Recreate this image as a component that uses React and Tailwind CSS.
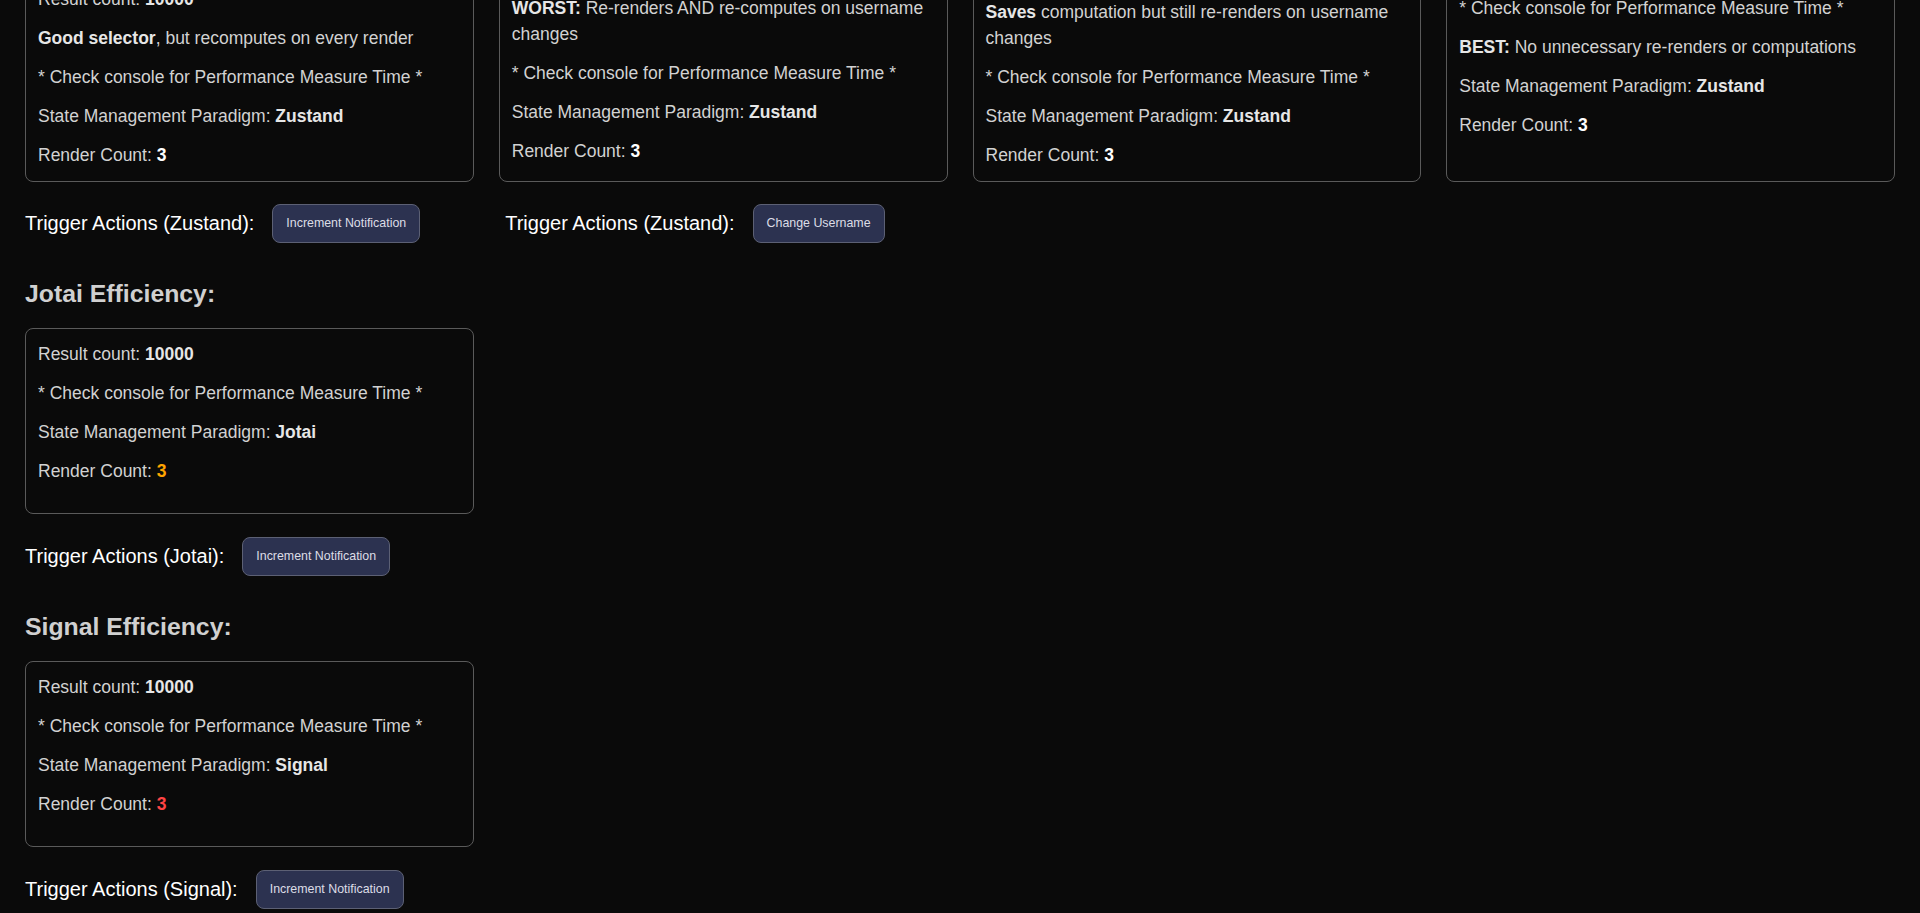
import React from "react";

const font = { fontFamily: '"Liberation Sans", Arial, sans-serif' };

function Line({ children }) {
  return <p className="m-0 text-[17.5px] leading-[26px] text-[#d2d2d2]">{children}</p>;
}

function B({ children, className = "" }) {
  return <strong className={"font-bold text-[#e6e6e6] " + className}>{children}</strong>;
}

function Card({ pt, pb = "pb-[13px]", children }) {
  return (
    <div className={"border border-[#5a5a5a] rounded-[8px] px-[12px] " + pt + " " + pb}>
      <div className="flex flex-col gap-[13px]">{children}</div>
    </div>
  );
}

function Btn({ children }) {
  return (
    <button className="bg-[#2c3250] border border-[#5c6074] rounded-[8px] px-[13px] py-[11px] text-[12.4px] leading-[15px] text-[#dcdde6] cursor-pointer">
      {children}
    </button>
  );
}

function Trigger({ label, button }) {
  return (
    <div className="flex items-center gap-[18px]">
      <span className="text-[20px] leading-[23px] text-white">{label}</span>
      <Btn>{button}</Btn>
    </div>
  );
}

function Section({ title, paradigm, countClass, triggerLabel }) {
  return (
    <>
      <h2 className="mt-[37px] m-0 text-[24.8px] leading-[28px] font-bold text-[#d0d0d0]">{title}</h2>
      <div className="mt-[20px] w-[449px]">
        <Card pt="pt-[12px]" pb="pb-[29px]">
          <Line>
            Result count: <B>10000</B>
          </Line>
          <Line>* Check console for Performance Measure Time *</Line>
          <Line>
            State Management Paradigm: <B>{paradigm}</B>
          </Line>
          <Line>
            Render Count: <strong className={"font-bold " + countClass}>3</strong>
          </Line>
        </Card>
      </div>
      <div className="mt-[23px] flex">
        <Trigger label={triggerLabel} button="Increment Notification" />
      </div>
    </>
  );
}

export default function App() {
  return (
    <div className="h-screen overflow-hidden bg-[#0a0a0a]" style={font}>
      <div className="-mt-[60px] px-[25px] flex flex-col">
        <div className="grid grid-cols-4 gap-[25px] items-stretch">
          <Card pt="pt-[45px]">
            <Line>
              Result count: <B>10000</B>
            </Line>
            <Line>
              <B>Good selector</B>, but recomputes on every render
            </Line>
            <Line>* Check console for Performance Measure Time *</Line>
            <Line>
              State Management Paradigm: <B>Zustand</B>
            </Line>
            <Line>
              Render Count: <strong className="font-bold text-white">3</strong>
            </Line>
          </Card>
          <Card pt="pt-[15px]">
            <Line>
              Result count: <B>10000</B>
            </Line>
            <Line>
              <B>WORST:</B> Re-renders AND re-computes on username changes
            </Line>
            <Line>* Check console for Performance Measure Time *</Line>
            <Line>
              State Management Paradigm: <B>Zustand</B>
            </Line>
            <Line>
              Render Count: <strong className="font-bold text-white">3</strong>
            </Line>
          </Card>
          <Card pt="pt-[19px]">
            <Line>
              Result count: <B>10000</B>
            </Line>
            <Line>
              <B>Saves</B> computation but still re-renders on username changes
            </Line>
            <Line>* Check console for Performance Measure Time *</Line>
            <Line>
              State Management Paradigm: <B>Zustand</B>
            </Line>
            <Line>
              Render Count: <strong className="font-bold text-white">3</strong>
            </Line>
          </Card>
          <Card pt="pt-[15px]">
            <Line>
              Result count: <B>10000</B>
            </Line>
            <Line>* Check console for Performance Measure Time *</Line>
            <Line>
              <B>BEST:</B> No unnecessary re-renders or computations
            </Line>
            <Line>
              State Management Paradigm: <B>Zustand</B>
            </Line>
            <Line>
              Render Count: <strong className="font-bold text-white">3</strong>
            </Line>
          </Card>
        </div>

        <div className="mt-[22px] flex items-center gap-[85px]">
          <Trigger label="Trigger Actions (Zustand):" button="Increment Notification" />
          <Trigger label="Trigger Actions (Zustand):" button="Change Username" />
        </div>

        <Section
          title="Jotai Efficiency:"
          paradigm="Jotai"
          countClass="text-[#ffa500]"
          triggerLabel="Trigger Actions (Jotai):"
        />
        <Section
          title="Signal Efficiency:"
          paradigm="Signal"
          countClass="text-[#ff4444]"
          triggerLabel="Trigger Actions (Signal):"
        />
      </div>
    </div>
  );
}
